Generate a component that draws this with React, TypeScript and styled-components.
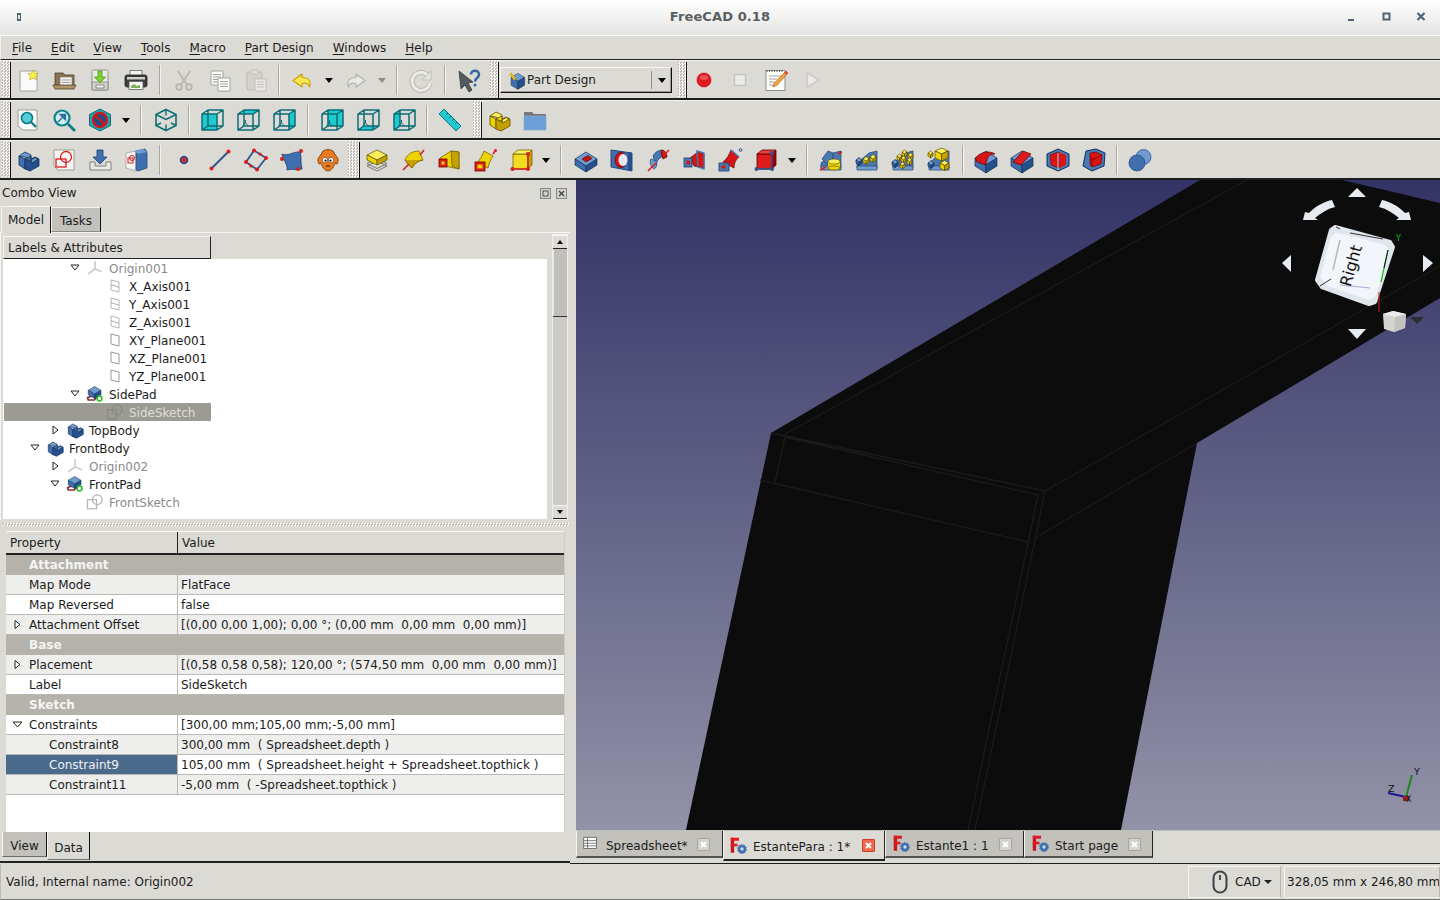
import React from "react";
import styled, { createGlobalStyle } from "styled-components";

const Global = createGlobalStyle`
  html, body { margin: 0; padding: 0; background: #dcdad5; }
  * { box-sizing: border-box; }
  #root { width: 1440px; height: 900px; overflow: hidden; }
`;

const Page = styled.div`
  width: 1440px; height: 900px; display: flex; flex-direction: column;
  background: #dcdad5; color: #1c1c1c;
  font: 12px/1 "DejaVu Sans", sans-serif; overflow: hidden;
`;

/* ---------- title bar ---------- */
const TitleBar = styled.div`
  height: 36px; flex: none; display: flex; align-items: center; justify-content: center;
  position: relative; background: linear-gradient(#ffffff, #e4e4e3);
  border-bottom: 1px solid #f8f8f8; padding-bottom: 3px;
`;
const TitleText = styled.div`
  font-weight: bold; font-size: 13px; color: #5a5f62; letter-spacing: .1px;
`;
const WinIcon = styled.svg`
  position: absolute; top: 10px; left: ${p => p.$x}px; width: 14px; height: 14px;
`;

/* ---------- menu ---------- */
const MenuBar = styled.div`
  height: 24px; flex: none; display: flex; align-items: center; padding-left: 2px;
  border-left: 1px solid #f2f1ee; border-bottom: 1px solid #222;
`;
const MenuItem = styled.div`
  padding: 0 9.5px 0 9px; font-size: 12px; line-height: 22px; color: #1c1c1c;
  & + & { padding-left: 9.5px; }
  u { text-underline-offset: 2px; }
`;

/* ---------- toolbars ---------- */
const Toolbar = styled.div`
  height: 40px; flex: none; display: flex; align-items: stretch; padding-left: 2px;
  border-top: 1px solid #f2f1ee; border-bottom: 2px solid #1d1d1d;
`;
const Grip = styled.div`
  width: ${p => p.$w || 8}px; flex: none; margin: 0 0 1px ${p => p.$before || 0}px;
  background: repeating-conic-gradient(#f6f5f2 0 25%, #bcbab3 0 50%) 0 0 / 3px 3px;
`;
const Group = styled.div`
  display: flex; align-items: center; border-left: 1px solid #111; margin-top: 1px;
  & > :first-child { margin-left: -1px; }
`;
const ToolBtn = styled.div`
  width: 36px; height: 36px; flex: none; display: flex; align-items: center; justify-content: center;
  opacity: ${p => (p.$off ? 0.45 : 1)};
`;
const Drop = styled.div`
  width: ${p => p.$w}px; height: 36px; flex: none; display: flex; align-items: center; justify-content: center;
  &::after {
    content: ""; border-left: 4.5px solid transparent; border-right: 4.5px solid transparent;
    border-top: 5px solid ${p => (p.$off ? "#8e8d88" : "#000")};
  }
`;
const Sep = styled.div`
  width: ${p => p.$w}px; height: 30px; flex: none; display: flex; justify-content: center;
  &::after { content: ""; width: 2px; height: 100%; background: linear-gradient(90deg, #a9a7a0 50%, #f4f3f0 50%); }
`;
const Combo = styled.div`
  width: 172px; height: 26px; flex: none; display: flex; align-items: center; padding-left: 7px;
  border: 1px solid #f4f3f0; border-right-color: #111; border-bottom-color: #111;
  box-shadow: inset -1px -1px 0 #9d9b94; gap: 0; font-size: 12px; position: relative;
  &&& { margin: 0 6px 0 1px; }
`;
const ComboArrow = styled.div`
  position: absolute; right: 0; top: 3px; bottom: 3px; width: 20px; display: flex; align-items: center; justify-content: center;
  border-left: 1px solid #8f8d87;
  &::after { content: ""; border-left: 4.5px solid transparent; border-right: 4.5px solid transparent; border-top: 5px solid #000; }
`;

/* ---------- main ---------- */
const Main = styled.div`
  height: 684px; flex: none; display: flex;
`;
const Dock = styled.div`
  width: 570px; flex: none; display: flex; flex-direction: column; border-bottom: 2px solid #222; height: 683px;
`;
const DockTitle = styled.div`
  height: 26px; flex: none; display: flex; align-items: center; padding: 0 2px; justify-content: space-between; font-size: 12px;
`;
const DockBtns = styled.div`
  display: flex; gap: 5px; padding-right: 1px;
`;
const TopTabs = styled.div`
  height: 27px; flex: none; display: flex; align-items: flex-end; border-bottom: 1px solid #f6f5f2; padding-left: 1px;
`;
const TopTab = styled.div`
  height: ${p => (p.$on ? 27 : 25)}px; width: 50px; display: flex; align-items: center; justify-content: center;
  font-size: 12px; background: ${p => (p.$on ? "#dcdad5" : "#c3c1bb")};
  border-top: 1px solid #f6f5f2; border-left: 1px solid #f6f5f2; border-right: 1px solid #111;
  ${p => (p.$on ? "margin-bottom:-1px;padding-bottom:1px;" : "border-bottom:1px solid #8d8b85;padding-top:2px;")}
`;
const ModelPane = styled.div`
  height: 287px; flex: none; display: flex; padding-left: 2px; border-left: 1px solid #f6f5f2;
`;
const TreeCol = styled.div`
  width: 544px; flex: none; padding-top: 3px; display: flex; flex-direction: column;
`;
const TreeHead = styled.div`
  width: 208px; height: 23px; flex: none; display: flex; align-items: center; padding: 0 0 0 4px; font-size: 12px;
  border-top: 1px solid #f6f5f2; border-left: 1px solid #f6f5f2; border-right: 1px solid #222; border-bottom: 1px solid #222;
`;
const Tree = styled.div`
  height: 260px; flex: none; background: #fff; overflow: hidden;
`;
const TreeRow = styled.div`
  width: 207px; height: 18px; display: flex; align-items: center; white-space: nowrap; margin-left: 1px;
  padding: 2px 0 0 ${p => 20 * p.$depth + 21}px;
  background: ${p => (p.$sel ? "#9c9b93" : "transparent")};
  color: ${p => (p.$sel ? "#dfded9" : p.$dim ? "#8a8a8a" : "#1c1c1c")};
  font-size: 12px;
`;
const Twist = styled.svg`
  width: 20px; height: 18px; flex: none; margin-top: -2px;
`;
const TreeIcon = styled.div`
  width: 20px; height: 18px; flex: none; display: flex; align-items: center; justify-content: center;
  margin: -2px 4px 0 0; opacity: ${p => (p.$dim ? 0.55 : 1)};
`;
const Scroll = styled.div`
  width: 16px; height: 286px; margin-left: 5px; margin-top: 1px; flex: none; display: flex; flex-direction: column;
  background: #c6c4be; border: 1px solid #f0efec;
`;
const ScrollBtn = styled.div`
  height: 14px; flex: none; background: #dcdad5; border-bottom: 1px solid #222; border-top: 1px solid #f6f5f2;
  display: flex; align-items: center; justify-content: center;
  &::after {
    content: ""; border-left: 3.5px solid transparent; border-right: 3.5px solid transparent;
    ${p => (p.$dir === "up" ? "border-bottom: 4px solid #111;" : "border-top: 4px solid #111;")}
  }
`;
const ScrollThumb = styled.div`
  height: 68px; flex: none; background: #c0bfb9; border-bottom: 1px solid #333; box-shadow: inset 1px 0 0 #e6e5e0;
`;
const ScrollTrack = styled.div`
  flex: 1; background: #cdcbc5;
`;
const Splitter = styled.div`
  height: 11px; flex: none; margin-left: 3px;
  background: linear-gradient(#dcdad5 3px, transparent 3px, transparent 6px, #dcdad5 6px),
    repeating-conic-gradient(#f6f5f2 0 25%, #bcbab3 0 50%) 0 0 / 3px 3px;
`;
const PropBox = styled.div`
  margin-left: 6px; width: 559px; height: 301px; flex: none; background: #fff; border-top: 1px solid #f6f5f2;
  border-right: 1px solid #cfcdc7; display: flex; flex-direction: column;
`;
const PropHead = styled.div`
  height: 23px; flex: none; display: grid; grid-template-columns: 172px 1fr; background: #dcdad5;
  border-bottom: 2px solid #222;
`;
const PropHeadCell = styled.div`
  display: flex; align-items: center; padding: 0 0 0 ${p => p.$pad}px; font-size: 12px;
  border-right: ${p => (p.$div ? "1px solid #222" : "none")};
`;
const PropGroup = styled.div`
  height: 20px; flex: none; background: #b4b2ab; color: #f4f4f2; font-weight: bold; font-size: 12px;
  display: flex; align-items: center; padding-left: 23px;
`;
const PropRow = styled.div`
  height: 20px; flex: none; display: grid; grid-template-columns: 172px 1fr; font-size: 12px;
  background: ${p => (p.$alt ? "#eeeeec" : "#fff")};
  border-bottom: 1px solid #bab8b2;
`;
const PropName = styled.div`
  display: flex; align-items: center; position: relative; white-space: pre; padding-top: 1px;
  padding-left: ${p => 23 + 20 * p.$lvl}px; border-right: 1px solid #bab8b2;
  ${p => (p.$sel ? "background:#4a6a8c;color:#f2f2f2;" : "")}
`;
const PropVal = styled.div`
  display: flex; align-items: center; padding: 1px 0 0 3px; white-space: pre; overflow: hidden;
`;
const PropTwist = styled.svg`
  position: absolute; left: 6px; top: 4px; width: 11px; height: 11px;
`;
const BotTabs = styled.div`
  height: 29px; flex: none; display: flex; align-items: flex-start; padding-left: 2px;
`;
const BotTab = styled.div`
  height: ${p => (p.$on ? 28 : 25)}px; width: ${p => (p.$on ? 43 : 45)}px; display: flex; align-items: center; justify-content: center;
  font-size: 12px; background: ${p => (p.$on ? "#dcdad5" : "#c3c1bb")};
  border-left: 1px solid #f6f5f2; border-right: 1px solid #111; border-bottom: 1px solid #6d6b66;
  padding-top: ${p => (p.$on ? 5 : 4)}px;
`;

const RightCol = styled.div`
  width: 870px; flex: none; display: flex; flex-direction: column; padding-left: 6px;
`;
const Viewport = styled.div`
  height: 651px; flex: none; position: relative; overflow: hidden;
  background: linear-gradient(#333366, #9292a8);
  border-bottom: 1px solid #bdbcb5;
`;
const Scene = styled.svg`
  position: absolute; inset: 0; width: 864px; height: 650px; display: block;
`;
const DocTabs = styled.div`
  height: 33px; flex: none; display: flex; align-items: flex-start; border-bottom: 1px solid #1d1d1d; margin-left: -6px; padding-left: 6px;
`;
const DocTab = styled.div`
  width: ${p => p.$w}px; height: ${p => (p.$on ? 30 : 27)}px; flex: none; display: flex; align-items: center; position: relative;
  background: ${p => (p.$on ? "#dcdad5" : "#c3c1bb")};
  border-left: 1px solid #f4f3f0;
  border-right: 1px solid #222; border-bottom: 2px solid ${p => (p.$on ? "#222" : "#55534f")};
  padding-left: ${p => p.$pad}px; gap: 5px; font-size: 12px;
  padding-top: ${p => (p.$on ? 1 : 0)}px;
  span { padding-top: ${p => (p.$on ? 2 : 4)}px; }
`;
const TabClose = styled.div`
  position: absolute; right: ${p => p.$r}px; top: ${p => (p.$on ? 8 : 7)}px; width: 13px; height: 13px;
  display: flex; align-items: center; justify-content: center;
  background: ${p => (p.$on ? "#ee6a4d" : "#d3d2cc")}; border: 1px solid ${p => (p.$on ? "#c9401f" : "#a8a6a0")};
  border-radius: 1px;
`;

const StatusBar = styled.div`
  height: 36px; flex: none; display: flex; align-items: center; font-size: 12px; border-left: 1px solid #bbb;
  border-bottom: 1px solid #777;
`;
const StatusMsg = styled.div`
  flex: 1; padding: 0 0 0 5px;
`;
const StatusCell = styled.div`
  height: 32px; width: ${p => p.$w}px; flex: none; display: flex; align-items: center; margin-left: ${p => p.$ml}px;
  border: 1px solid #f6f5f2; border-right-color: #b8b6af; border-bottom-color: #f6f5f2; white-space: nowrap;
  padding-left: ${p => p.$pad}px; gap: 3px; overflow: hidden;
`;
const Caret = styled.span`
  border-left: 4px solid transparent; border-right: 4px solid transparent; border-top: 4px solid #222;
`;
const GlyphSvg = styled.svg`
  width: ${p => p.$s || 24}px; height: ${p => p.$s || 24}px; flex: none; display: block; overflow: visible;
`;

/* ---------- drawing helpers ---------- */
type C = { t: string; f: string; s: string; o: string };
const Y: C = { t: "#fcef5e", f: "#edd400", s: "#c4a000", o: "#5c4a00" };
const B: C = { t: "#6f9bd0", f: "#3f6fae", s: "#24508e", o: "#122f55" };

const Box = ({ x, y, w, h, d, c }: { x: number; y: number; w: number; h: number; d: number; c: C }) => (
  <g stroke={c.o} strokeWidth=".7" strokeLinejoin="round">
    <polygon points={`${x},${y} ${x + w / 2},${y - d} ${x + w},${y} ${x + w / 2},${y + d}`} fill={c.t} />
    <polygon points={`${x},${y} ${x + w / 2},${y + d} ${x + w / 2},${y + d + h} ${x},${y + h}`} fill={c.f} />
    <polygon points={`${x + w},${y} ${x + w / 2},${y + d} ${x + w / 2},${y + d + h} ${x + w},${y + h}`} fill={c.s} />
  </g>
);
const G = ({ children, s }: { children: React.ReactNode; s?: number }) => (
  <GlyphSvg $s={s} viewBox="0 0 24 24">{children}</GlyphSvg>
);
const LBlock = ({ c }: { c: C }) => (
  <g stroke={c.o} strokeWidth=".8" strokeLinejoin="round">
    <polygon points="3,8 9,4 15,7 15,12 9,9" fill={c.t} />
    <polygon points="3,8 9,11 9,21 3,17" fill={c.f} />
    <polygon points="9,11 15,14 15,11 19,9 23,11 23,18 14,23 9,21" fill={c.s} />
    <polygon points="9,11 15,8 15,12 13,13" fill={c.f} />
    <polygon points="15,12 19,9.5 22,11 16,15" fill={c.t} />
  </g>
);
const Page2 = ({ x = 4, y = 3, w = 16, h = 19, fill = "#fafafa" }) => (
  <rect x={x} y={y} width={w} height={h} fill={fill} stroke="#9a9a95" strokeWidth=".9" rx=".5" />
);
const Wedge = () => (
  <g stroke="#1f3f6a" strokeWidth=".7" strokeLinejoin="round">
    <polygon points="2,15 14,5 22,3 22,20 2,20" fill="#4a78b0" />
    <polygon points="2,18 22,18 22,22 2,22" fill="#6f9bd0" />
  </g>
);

const Ic = {
  New: () => (<G><Page2 x={4} y={3} w={17} h={20} /><polygon points="17,2 18.6,5.4 22.4,5.6 19.6,8.2 20.6,11.8 17,10 13.6,11.8 14.4,8.2 11.8,5.6 15.4,5.4" fill="#fcef4e" stroke="#c4a000" strokeWidth=".6" /></G>),
  Open: () => (<G><path d="M3 5h8l2 2h9v13H3z" fill="#8a7350" stroke="#4f3f28" strokeWidth=".8" /><rect x="8" y="9" width="12" height="9" fill="#f3f3f0" stroke="#777" strokeWidth=".6" /><path d="M9.500 12h9M9.500 14.500h9" stroke="#888" strokeWidth=".8" /><path d="M1 17h23l-2 4H3z" fill="#b09468" stroke="#4f3f28" strokeWidth=".8" /></G>),
  Save: () => (<G><rect x="4" y="2" width="16" height="20" rx="1.500" fill="#e8e8e4" stroke="#8b8b86" strokeWidth=".9" /><rect x="4" y="14" width="16" height="8" fill="#d1d1cc" stroke="#777" strokeWidth=".7" /><rect x="8" y="17" width="8" height="3" fill="#f5f5f2" stroke="#666" strokeWidth=".7" /><path d="M10 3h4v6h3.500L12 15 6.500 9H10z" fill="#7fce3a" stroke="#4e9a06" strokeWidth=".8" /></G>),
  Print: () => (<G><rect x="6" y="2.500" width="12" height="6" fill="#f3f3f0" stroke="#555" strokeWidth=".7" /><rect x="1" y="7" width="22" height="12" rx="2" fill="#3d3d3d" stroke="#222" strokeWidth=".8" /><rect x="3" y="9" width="18" height="2.500" fill="#cfcfca" /><rect x="5" y="13.500" width="14" height="8" fill="#f5f5f2" stroke="#555" strokeWidth=".7" /><path d="M7 18l3-2 3 2 3-1v3H7z" fill="#79b058" /></G>),
  Cut: () => (<G><g stroke="#8a8a85" strokeWidth="1.800" fill="none"><path d="M6 3l8.500 13M18 3L9.500 16" /><circle cx="7" cy="19" r="2.800" /><circle cx="17" cy="19" r="2.800" /></g></G>),
  Copy: () => (<G><Page2 x={3} y={3} w={12} h={14} fill="#fbfbfa" /><path d="M5 6.500h8M5 9h8M5 11.500h8M5 14h6" stroke="#888" strokeWidth=".8" /><Page2 x={10} y={10} w={12} h={13} fill="#fbfbfa" /><path d="M12 13.500h8M12 16h8M12 18.500h8" stroke="#888" strokeWidth=".8" /></G>),
  Paste: () => (<G><rect x="3" y="4" width="15" height="18" rx="1" fill="#c8c8c2" stroke="#88887f" strokeWidth=".8" /><rect x="7" y="2" width="7" height="4" rx="1" fill="#e6e6e2" stroke="#88887f" strokeWidth=".7" /><Page2 x={11} y={11} w={11} h={12} /><path d="M13 14h7M13 16.500h7M13 19h7" stroke="#888" strokeWidth=".8" /></G>),
  Undo: () => (<G><path d="M11 5L2 11.500 11 18v-3.500c4-1 7 0 7.500 3.500 2-6-1-9.500-7.500-9.500z" fill="#fce94f" stroke="#c4a000" strokeWidth="1.100" strokeLinejoin="round" transform="translate(1,1)" /></G>),
  Redo: () => (<G><path d="M13 5l9 6.500L13 18v-3.500c-4-1-7 0-7.500 3.500-2-6 1-9.500 7.500-9.500z" fill="#e9e9e6" stroke="#b0b0aa" strokeWidth="1.100" strokeLinejoin="round" transform="translate(0,1)" /></G>),
  Refresh: () => (<G><path d="M20 9a9 9 0 1 0 1 6" fill="none" stroke="#b9b9b3" strokeWidth="5" /><path d="M20 9a9 9 0 1 0 1 6" fill="none" stroke="#eceae6" strokeWidth="3" /><polygon points="22,3 22,12 13,12" fill="#e4e3de" stroke="#b9b9b3" strokeWidth=".8" /></G>),
  What: () => (<G><polygon points="2,3 16,14 11,15 15,22 12,24 8,17 4,21" fill="#555a60" stroke="#2e3236" strokeWidth=".7" /><path d="M14 6.500c0-5 8-5 8 0 0 3.500-4 3.500-4 7" fill="none" stroke="#3465a4" strokeWidth="2.600" /><circle cx="18" cy="17" r="1.500" fill="#3465a4" /></G>),
  PD: ({ s = 24 }: { s?: number }) => (<G s={s}><Box x={4} y={8} w={17} h={10} d={5} c={B} /><path d="M3 3l6 8" stroke="#c4a000" strokeWidth="3.500" /><path d="M3 3l6 8" stroke="#fce94f" strokeWidth="1.800" strokeDasharray="1.500 1" /></G>),
  Rec: () => (<G><circle cx="12" cy="12" r="7" fill="#e01b24" stroke="#c00" strokeWidth=".7" /><ellipse cx="12" cy="9.500" rx="4" ry="2.500" fill="#f06a6a" opacity=".7" /></G>),
  Stop: () => (<G><rect x="6.500" y="6.500" width="11" height="11" fill="#ecebe7" stroke="#c4c3bd" strokeWidth="1.300" /></G>),
  MacroEd: () => (<G><rect x="2" y="2.500" width="19" height="20" fill="#fdfdfb" stroke="#777" strokeWidth=".8" /><path d="M3 2v2M5.500 2v2M8 2v2M10.500 2v2M13 2v2M15.500 2v2M18 2v2" stroke="#444" strokeWidth=".8" /><path d="M5 8h12M5 11h8M5 14h6M5 17h6" stroke="#9a9a95" strokeWidth=".9" /><path d="M22 3l2 2-11 12-4 2 1.500-4z" fill="#f5a742" stroke="#a85c00" strokeWidth=".7" /><path d="M22 3l2 2-2 2-2-2z" fill="#e04e4e" /></G>),
  Play: () => (<G><polygon points="7,5 19,12 7,19" fill="#ecebe7" stroke="#c4c3bd" strokeWidth="1.200" /></G>),
  FitAll: () => (<G><polygon points="2,2 21,2 21,22 7,22 2,18" fill="#fafafa" stroke="#8a8a85" strokeWidth=".8" /><circle cx="11" cy="10" r="5.500" fill="#55cdd6" stroke="#0d7b84" strokeWidth="1.600" /><path d="M15 14l5 5" stroke="#0d7b84" strokeWidth="2.400" /></G>),
  FitSel: () => (<G><circle cx="10" cy="10" r="7.500" fill="#cfeff2" stroke="#0d8089" strokeWidth="2.200" /><path d="M5.500 14.500l6-6M8 6.500h5.500V12z" fill="#2f6fa0" stroke="#2f6fa0" strokeWidth="1.300" /><path d="M16 16l7 7" stroke="#0d8089" strokeWidth="2.800" /></G>),
  DrawStyle: () => (<G><polygon points="12,1 22.500,6.500 22.500,17.500 12,23 1.500,17.500 1.500,6.500" fill="#1fa6ae" stroke="#0b5f66" strokeWidth=".9" /><circle cx="12" cy="12" r="7" fill="#1b4f8a" stroke="#d41616" strokeWidth="2.400" /><path d="M7 7l10 10" stroke="#d41616" strokeWidth="2.400" /></G>),
  Iso: () => (<G><polygon points="12,1.500 22,6.500 22,17.500 12,22.500 2,17.500 2,6.500" fill="none" stroke="#0d6d75" strokeWidth="1.600" /><path d="M2 6.500L12 11.500 22 6.500M12 1.500v6M12 22.500v-6M2 17.500l5-2.500M22 17.500l-5-2.500" stroke="#0d6d75" strokeWidth="1.400" fill="none" /></G>),
  View: ({ f }: { f: string }) => {
    const P: Record<string, string> = {
      front: "2,6 17,6 17,22 2,22", top: "2,6 8,2 23,2 17,6", right: "17,6 23,2 23,18 17,22",
      rear: "8,2 23,2 23,18 8,18", bottom: "2,22 8,18 23,18 17,22", left: "2,6 8,2 8,18 2,22",
    };
    return (<G><polygon points={P[f]} fill="#1fc9cf" /><path d="M2 6h15v16H2zM2 6l6-4h15v16l-6 4M17 6l6-4M8 2v16H23M8 18l-6 4" fill="none" stroke="#0d6d75" strokeWidth="1.500" strokeLinejoin="round" />{f !== "front" && <path d="M9.500 12v3M9.500 15l-3 3M9.500 15l3 3" stroke="#0d6d75" strokeWidth="1" fill="none" />}</G>);
  },
  Measure: () => (<G><polygon points="6,1 23,18 18,23 1,6" fill="#1fc9cf" stroke="#0d6d75" strokeWidth=".9" /><path d="M8 7l2-2M11 10l2-2M14 13l2-2M17 16l2-2" stroke="#0d6d75" strokeWidth="1" /></G>),
  Part: () => (<G><LBlock c={Y} /></G>),
  Folder: () => (<G><path d="M1 4h8l2 2h12v4H1z" fill="#77777a" /><path d="M1 8h22v14H1z" fill="#6c9fd8" stroke="#8aa8cc" strokeWidth=".7" /></G>),
  Body: () => (<G><LBlock c={B} /></G>),
  Sketch: () => (<G><polygon points="2,2 22,2 22,22 6,22 2,18" fill="#f4f4f2" stroke="#8a8a85" strokeWidth=".8" /><rect x="4" y="11" width="10" height="8" fill="none" stroke="#dd1f1f" strokeWidth="1.300" /><circle cx="14" cy="9" r="5.500" fill="none" stroke="#dd1f1f" strokeWidth="1.300" /></G>),
  Attach: () => (<G><path d="M2 14v8h21v-8h-5v4H7v-4z" fill="#e8e8e4" stroke="#777" strokeWidth=".9" /><path d="M9 2h6v7h4l-7 7-7-7h4z" fill="#3f6fae" stroke="#1b3f70" strokeWidth=".8" /></G>),
  Clone: () => (<G><polygon points="2,5 12,3 12,23 2,20" fill="#f4f4f2" stroke="#999" strokeWidth=".7" /><rect x="4" y="10" width="5" height="5" fill="none" stroke="#dd1f1f" strokeWidth="1" /><circle cx="8" cy="10" r="2.500" fill="none" stroke="#dd1f1f" strokeWidth="1" /><polygon points="12,3 21,1 23,4 23,20 14,23 12,22" fill="#3f6fae" stroke="#1b3f70" strokeWidth=".7" /><polygon points="10,3 19,1 23,4 14,6" fill="#6f9bd0" /></G>),
  Point: () => (<G><circle cx="12" cy="12" r="3.500" fill="#c8322f" stroke="#2a4f8a" strokeWidth="1.600" /></G>),
  Line: () => (<G><path d="M3.500 20.500l17-17" stroke="#2e558f" strokeWidth="2" /><circle cx="3.500" cy="20.500" r="2" fill="#d81e1e" /><circle cx="20.500" cy="3.500" r="2" fill="#d81e1e" /></G>),
  Plane: () => (<G><polygon points="10,2.500 22,10 13,21.500 2,14" fill="none" stroke="#2e558f" strokeWidth="1.800" /><g fill="#d81e1e"><circle cx="10" cy="2.500" r="2" /><circle cx="22" cy="10" r="2" /><circle cx="13" cy="21.500" r="2" /><circle cx="2" cy="14" r="2" /><circle cx="16" cy="6" r="1.600" /><circle cx="7" cy="18" r="1.600" /></g></G>),
  Lcs: () => (<G><path d="M2 6c5 3 12-3 18-2 2 5 0 10 2 17-6 2-10-1-15 1C8 16 3 12 2 6z" fill="#3f6fae" stroke="#1b3f70" strokeWidth=".8" /><g fill="#d81e1e"><circle cx="2" cy="11" r="2" /><circle cx="21" cy="3" r="2" /><circle cx="18" cy="21" r="2" /></g></G>),
  Sheep: () => (<G><path d="M7 3c3-2 7-2 10 0l3 5c2 1 3 5 1 8l-2-1c-1 4-4 8-7 8s-6-4-7-8l-2 1C1 13 2 9 4 8z" fill="#e8791c" stroke="#7f3f08" strokeWidth=".9" /><circle cx="9" cy="12" r="2.600" fill="#fff" stroke="#444" strokeWidth=".6" /><circle cx="15" cy="12" r="2.600" fill="#fff" stroke="#444" strokeWidth=".6" /><circle cx="9.500" cy="12.500" r="1.100" fill="#111" /><circle cx="14.500" cy="12.500" r="1.100" fill="#111" /><path d="M10 18h4" stroke="#5a2d06" strokeWidth="1.200" /></G>),
  Pad: () => (<G><path d="M2 18l10-5 10 5-10 5z" fill="none" stroke="#777" strokeWidth="1" /><path d="M2 15.500l10-5 10 5-10 5z" fill="none" stroke="#777" strokeWidth="1" /><Box x={2} y={7} w={20} h={5} d={5} c={Y} /></G>),
  Rev: () => (<G><path d="M4 12C6 6 12 3 18 3l4 9c-4 0-8 3-11 8z" fill="#edd400" stroke="#7a6400" strokeWidth=".8" /><path d="M4 12c2 3 4 6 7 8 2-4 6-7 11-8" fill="#c4a000" stroke="#7a6400" strokeWidth=".8" /><path d="M2 22l6-6M19 7l4-5" stroke="#d81e1e" strokeWidth="1.600" /></G>),
  Loft: () => (<G><polygon points="3,10 14,3 22,4 22,21 8,18" fill="#edd400" stroke="#7a6400" strokeWidth=".8" /><polygon points="14,3 22,4 22,21 15,18" fill="#c4a000" stroke="#7a6400" strokeWidth=".8" /><rect x="2" y="11" width="8" height="8" fill="#d81e1e" stroke="#700" strokeWidth=".8" /><rect x="4.500" y="13.500" width="3" height="3" fill="#edd400" /></G>),
  Pipe: () => (<G><path d="M4 15C8 10 10 6 11 3l9 5c-2 3-4 7-5 12z" fill="#edd400" stroke="#7a6400" strokeWidth=".8" /><rect x="2" y="14" width="10" height="9" fill="#d81e1e" stroke="#700" strokeWidth=".8" /><rect x="4.500" y="16.500" width="5" height="4" fill="#edd400" /><path d="M20 6l2-3" stroke="#d81e1e" strokeWidth="1.600" /><circle cx="22.500" cy="2.500" r="1.500" fill="#d81e1e" /></G>),
  PrimAdd: () => (<G><rect x="4" y="6" width="15" height="15" fill="#f2dc1f" stroke="#7a6400" strokeWidth=".8" /><polygon points="4,6 9,2 23,2 19,6" fill="#fcef5e" stroke="#7a6400" strokeWidth=".8" /><polygon points="19,6 23,2 23,17 19,21" fill="#c4a000" stroke="#7a6400" strokeWidth=".8" /><path d="M4 21l15-0M19 6v15" stroke="#d81e1e" strokeWidth="1.400" /><g fill="#d81e1e"><circle cx="3.500" cy="21" r="2" /><circle cx="19" cy="21" r="2" /><circle cx="19" cy="6" r="2" /></g></G>),
  Pocket: () => (<G><Box x={1} y={11} w={22} h={6} d={7} c={B} /><polygon points="8,11 14,7.500 18,10.500 12,14" fill="#c21313" stroke="#5a0000" strokeWidth=".6" /></G>),
  Hole: () => (<G><polygon points="1,2 22,5 22,23 1,19" fill="#3f6fae" stroke="#1b3f70" strokeWidth=".9" /><polygon points="18,4 22,5 22,23 18,22" fill="#24508e" /><ellipse cx="11" cy="12" rx="6" ry="7.500" fill="#d81414" stroke="#5a0000" strokeWidth=".7" /><ellipse cx="13" cy="12" rx="4.500" ry="6" fill="#e8e8ee" /></G>),
  Groove: () => (<G><path d="M7 8C9 4 13 2 16 2l2 6c-4 1-7 4-8 9z" fill="#4a78b0" stroke="#1b3f70" strokeWidth=".7" /><path d="M16 2c3 0 5 4 5 7l-4 2-2-7z" fill="#d81414" stroke="#5a0000" strokeWidth=".7" /><path d="M5 11c-2 3 0 8 3 10 2-1 4-4 2-8z" fill="#6f9bd0" stroke="#1b3f70" strokeWidth=".7" /><path d="M2 23l8-8M19 6l4-4" stroke="#d81e1e" strokeWidth="1.600" /></G>),
  SubLoft: () => (<G><polygon points="8,10 16,4 22,6 22,20 12,18" fill="#d81414" stroke="#5a0000" strokeWidth=".7" /><polygon points="15,3 22,5 22,21 16,19" fill="none" stroke="#4a78b0" strokeWidth="1.400" /><rect x="2" y="10" width="8" height="9" fill="#4a78b0" stroke="#1b3f70" strokeWidth=".8" /><rect x="4.500" y="12.500" width="3.500" height="4" fill="#d81414" /></G>),
  SubPipe: () => (<G><path d="M5 14c4-3 6-7 8-12l8 7c-3 2-5 6-5 11z" fill="#d81414" stroke="#5a0000" strokeWidth=".7" /><rect x="1" y="15" width="10" height="8" fill="#4a78b0" stroke="#1b3f70" strokeWidth=".8" /><rect x="3.500" y="17.500" width="4" height="3" fill="#d81414" /><path d="M13 2l8 7" stroke="#4a78b0" strokeWidth="1.600" /><circle cx="22.500" cy="2" r="1.400" fill="none" stroke="#2e558f" /></G>),
  PrimSub: () => (<G><rect x="3" y="6" width="15" height="15" fill="#e01b1b" stroke="#5a0000" strokeWidth=".8" /><polygon points="3,6 8,2 22,2 18,6" fill="#ef3b3b" stroke="#5a0000" strokeWidth=".8" /><polygon points="18,6 22,2 22,17 18,21" fill="#a40000" stroke="#5a0000" strokeWidth=".8" /><path d="M3 21h15V6" stroke="#2e558f" strokeWidth="1.400" fill="none" /><g fill="#2e558f"><circle cx="2.500" cy="21" r="2" /><circle cx="18" cy="21" r="2" /><circle cx="18" cy="5" r="2" /></g></G>),
  Feat: ({ v }: { v: number }) => (
    <G>
      <Wedge />
      {v === 0 && <><polygon points="3,11 9,3 14,5 14,13 9,17" fill="#4a78b0" stroke="#1f3f6a" strokeWidth=".7" /><rect x="9" y="14" width="12" height="6" fill="#edd400" /><ellipse cx="15" cy="20" rx="6" ry="2" fill="#edd400" stroke="#5c4a00" strokeWidth=".6" /><ellipse cx="15" cy="13.500" rx="6" ry="2.500" fill="#fcef5e" stroke="#5c4a00" strokeWidth=".6" /><path d="M1 22l6-3M19 6l4-2" stroke="#d81e1e" strokeWidth="1.400" /></>}
      {v === 1 && <><Box x={1} y={12} w={6} h={3} d={2.500} c={B} /><Box x={8} y={11} w={6} h={3} d={2.500} c={Y} /><Box x={15} y={9} w={6} h={3} d={2.500} c={Y} /></>}
      {v === 2 && <><Box x={1} y={14} w={6} h={3} d={2.500} c={B} /><Box x={6} y={8} w={5} h={3} d={2} c={Y} /><Box x={11} y={4} w={5} h={3} d={2} c={Y} /><Box x={17} y={7} w={5} h={3} d={2} c={Y} /><Box x={10} y={10} w={5} h={3} d={2} c={Y} /><Box x={16} y={12} w={5} h={3} d={2} c={Y} /><Box x={9} y={16} w={5} h={3} d={2} c={Y} /></>}
      {v === 3 && <><Box x={1} y={15} w={6} h={3} d={2.500} c={B} /><Box x={1} y={5} w={5} h={3} d={2} c={Y} /><Box x={8} y={3} w={13} h={7} d={3} c={Y} /><Box x={13} y={15} w={9} h={5} d={2.500} c={Y} /></>}
    </G>
  ),
  Fillet: () => (<G><Box x={1} y={10} w={22} h={8} d={7} c={B} /><path d="M2 10c2-4 8-6 12-6 3 0 6 1 7 2-6 0-8 3-9 11-3-1-7-2-10-4z" fill="#d81414" stroke="#5a0000" strokeWidth=".7" /></G>),
  Chamfer: () => (<G><Box x={1} y={10} w={22} h={8} d={7} c={B} /><polygon points="3,14 13,3 21,6 11,17" fill="#e01b1b" stroke="#5a0000" strokeWidth=".7" /></G>),
  Draft: () => (<G><polygon points="12,1 23,6 23,18 12,23 1,18 1,6" fill="#4a78b0" stroke="#0d2f60" strokeWidth="1" /><polygon points="12,4 20,7 20,17 13,20" fill="#d81414" /><polygon points="4,7 12,4 13,20 5,17" fill="#d81414" stroke="#5a0000" strokeWidth=".5" /><path d="M12 5v17" stroke="#cfd8e6" strokeWidth="1" /></G>),
  Thick: () => (<G><polygon points="4,3 14,1 23,5 22,18 10,23 1,18" fill="#4a78b0" stroke="#0d2f60" strokeWidth="1" /><polygon points="8,5 14,4 20,7 19,16 10,19 8,17" fill="#d81414" stroke="#5a0000" strokeWidth=".6" /><path d="M10 19V12l10-5M10 12L8 8" stroke="#7a0000" strokeWidth=".8" fill="none" /></G>),
  Bool: () => (<G><circle cx="15.500" cy="9" r="7.500" fill="#6f9bd0" stroke="#2e558f" strokeWidth=".8" /><circle cx="9" cy="15" r="8" fill="#3f6fae" stroke="#24508e" strokeWidth=".8" /></G>),
  Origin: () => (<G s={18}><path d="M12 3v10M12 13l9 4M12 13L3 20" stroke="#a3a3a0" strokeWidth="2.200" fill="none" /></G>),
  Axis: () => (<G s={16}><path d="M6 3l12 3v15L6 18z" fill="#fff" stroke="#a3a3a0" strokeWidth="1.200" /><path d="M6 10l12 4" stroke="#999" strokeWidth="1.200" /></G>),
  PlaneT: () => (<G s={16}><path d="M6 3l12 3v15L6 18z" fill="#fff" stroke="#8f8f8c" strokeWidth="1.400" /></G>),
  PadT: () => (<G s={18}><path d="M2 17c5-3 10-3 12 0l-3 3H3z" fill="none" stroke="#8b2e2e" strokeWidth="2.200" /><Box x={3} y={7} w={17} h={6} d={5} c={B} /><circle cx="18" cy="18" r="3.200" fill="#fff" stroke="#1fbe1f" strokeWidth="2" /></G>),
  BodyT: () => (<G s={18}><LBlock c={B} /></G>),
  SketchT: () => (<G s={18}><rect x="2" y="9" width="12" height="12" fill="none" stroke="#777" strokeWidth="1.600" /><circle cx="15" cy="9" r="6.500" fill="none" stroke="#777" strokeWidth="1.600" /></G>),
  FC: () => (<G s={18}><rect x="1" y="1" width="4.500" height="20" fill="#c4161c" /><rect x="1" y="1" width="11" height="4" fill="#e01b24" /><rect x="1" y="9" width="9" height="3.500" fill="#e01b24" /><circle cx="16" cy="16" r="5.500" fill="#3f6fae" stroke="#3f6fae" strokeWidth="2" strokeDasharray="2 1.400" /><circle cx="16" cy="16" r="2.200" fill="#cfe0f2" /></G>),
  Sheet: () => (<G s={18}><rect x="1" y="3" width="17" height="15" fill="#fff" stroke="#555" strokeWidth="1" /><path d="M1 7.500h17M1 11h17M1 14.500h17M6 3v15" stroke="#555" strokeWidth="1" /></G>),
};

const X = ({ c = "#fff" }: { c?: string }) => (
  <GlyphSvg $s={9} viewBox="0 0 9 9"><path d="M2 2l5 5M7 2L2 7" stroke={c} strokeWidth="2" /></GlyphSvg>
);

const Tw = ({ open }: { open: boolean }) => (
  <Twist viewBox="0 0 20 18">
    {open ? <polygon points="6,6 14,6 10,11" fill="#fff" stroke="#222" strokeWidth="1" /> : <polygon points="8,5 13,9 8,13" fill="#fff" stroke="#222" strokeWidth="1" />}
  </Twist>
);

const tree = [
  { d: 2, o: true, i: <Ic.Origin />, t: "Origin001", dim: true },
  { d: 3, i: <Ic.Axis />, t: "X_Axis001" },
  { d: 3, i: <Ic.Axis />, t: "Y_Axis001" },
  { d: 3, i: <Ic.Axis />, t: "Z_Axis001" },
  { d: 3, i: <Ic.PlaneT />, t: "XY_Plane001" },
  { d: 3, i: <Ic.PlaneT />, t: "XZ_Plane001" },
  { d: 3, i: <Ic.PlaneT />, t: "YZ_Plane001" },
  { d: 2, o: true, i: <Ic.PadT />, t: "SidePad" },
  { d: 3, i: <Ic.SketchT />, t: "SideSketch", sel: true, idim: true },
  { d: 1, o: false, i: <Ic.BodyT />, t: "TopBody" },
  { d: 0, o: true, i: <Ic.BodyT />, t: "FrontBody" },
  { d: 1, o: false, i: <Ic.Origin />, t: "Origin002", dim: true },
  { d: 1, o: true, i: <Ic.PadT />, t: "FrontPad" },
  { d: 2, i: <Ic.SketchT />, t: "FrontSketch", dim: true },
];

const Lbl = ({ k, l }: { k: string; l: string }) => (
  <MenuItem><u>{k}</u>{l}</MenuItem>
);

const T = ({ children, off }: { children: React.ReactNode; off?: boolean }) => <ToolBtn $off={off}>{children}</ToolBtn>;

const Edge = styled.path`
  fill: none; stroke: #1b1b1b; stroke-width: 1.300;
`;

export default function App() {
  return (
    <Page>
      <Global />
      <TitleBar>
        <WinIcon $x={12} viewBox="0 0 14 14"><path d="M5 3h4v8H5z" fill="#4f6470" /><rect x="6" y="5" width="2" height="4" fill="#dfe3e5" /></WinIcon>
        <TitleText>FreeCAD 0.18</TitleText>
        <WinIcon $x={1347} viewBox="0 0 14 14"><rect x="1" y="9" width="6" height="2" fill="#4f6470" /></WinIcon>
        <WinIcon $x={1380} viewBox="0 0 14 14"><rect x="3.500" y="3.500" width="6" height="6" fill="none" stroke="#4f6470" strokeWidth="2" /></WinIcon>
        <WinIcon $x={1415} viewBox="0 0 14 14"><path d="M2.500 3l7 7M9.500 3l-7 7" stroke="#4f6470" strokeWidth="2.200" /></WinIcon>
      </TitleBar>

      <MenuBar>
        <Lbl k="F" l="ile" /><Lbl k="E" l="dit" /><Lbl k="V" l="iew" /><Lbl k="T" l="ools" /><Lbl k="M" l="acro" />
        <Lbl k="P" l="art Design" /><Lbl k="W" l="indows" /><Lbl k="H" l="elp" />
      </MenuBar>

      <Toolbar>
        <Grip />
        <Group>
          <T><Ic.New /></T><T><Ic.Open /></T><T><Ic.Save /></T><T><Ic.Print /></T>
          <Sep $w={12} />
          <T off><Ic.Cut /></T><T><Ic.Copy /></T><T off><Ic.Paste /></T>
          <Sep $w={10} />
          <T><Ic.Undo /></T><Drop $w={17} />
          <T><Ic.Redo /></T><Drop $off $w={18} />
          <Sep $w={12} />
          <T><Ic.Refresh /></T>
          <Sep $w={12} />
          <T><Ic.What /></T>
        </Group>
        <Grip $before={3} />
        <Group>
          <Combo><Ic.PD s={19} />Part Design<ComboArrow /></Combo>
        </Group>
        <Grip />
        <Group>
          <T><Ic.Rec /></T><T><Ic.Stop /></T><T><Ic.MacroEd /></T><T><Ic.Play /></T>
        </Group>
      </Toolbar>

      <Toolbar>
        <Grip />
        <Group>
          <T><Ic.FitAll /></T><T><Ic.FitSel /></T><T><Ic.DrawStyle /></T><Drop $w={16} />
          <Sep $w={14} />
          <T><Ic.Iso /></T>
          <Sep $w={10} />
          <T><Ic.View f="front" /></T><T><Ic.View f="top" /></T><T><Ic.View f="right" /></T>
          <Sep $w={12} />
          <T><Ic.View f="rear" /></T><T><Ic.View f="bottom" /></T><T><Ic.View f="left" /></T>
          <Sep $w={10} />
          <T><Ic.Measure /></T>
        </Group>
        <Grip $before={5} />
        <Group>
          <T><Ic.Part /></T><T><Ic.Folder /></T>
        </Group>
      </Toolbar>

      <Toolbar>
        <Grip />
        <Group>
          <T><Ic.Body /></T><T><Ic.Sketch /></T><T><Ic.Attach /></T><T><Ic.Clone /></T>
          <Sep $w={12} />
          <T><Ic.Point /></T><T><Ic.Line /></T><T><Ic.Plane /></T><T><Ic.Lcs /></T><T><Ic.Sheep /></T>
        </Group>
        <Grip $before={2} $w={11} />
        <Group>
          <T><Ic.Pad /></T><T><Ic.Rev /></T><T><Ic.Loft /></T><T><Ic.Pipe /></T><T><Ic.PrimAdd /></T><Drop $w={14} />
          <Sep $w={15} />
          <T><Ic.Pocket /></T><T><Ic.Hole /></T><T><Ic.Groove /></T><T><Ic.SubLoft /></T><T><Ic.SubPipe /></T><T><Ic.PrimSub /></T><Drop $w={16} />
          <Sep $w={13} />
          <T><Ic.Feat v={0} /></T><T><Ic.Feat v={1} /></T><T><Ic.Feat v={2} /></T><T><Ic.Feat v={3} /></T>
          <Sep $w={11} />
          <T><Ic.Fillet /></T><T><Ic.Chamfer /></T><T><Ic.Draft /></T><T><Ic.Thick /></T>
          <Sep $w={10} />
          <T><Ic.Bool /></T>
        </Group>
      </Toolbar>

      <Main>
        <Dock>
          <DockTitle>
            Combo View
            <DockBtns>
              <GlyphSvg $s={11} viewBox="0 0 11 11"><rect x=".5" y=".5" width="10" height="10" fill="#d2d0ca" stroke="#888" /><rect x="3" y="3" width="5" height="5" fill="none" stroke="#555" /></GlyphSvg>
              <GlyphSvg $s={11} viewBox="0 0 11 11"><rect x=".5" y=".5" width="10" height="10" fill="#d2d0ca" stroke="#888" /><path d="M3 3l5 5M8 3L3 8" stroke="#444" strokeWidth="1.300" /></GlyphSvg>
            </DockBtns>
          </DockTitle>
          <TopTabs>
            <TopTab $on>Model</TopTab>
            <TopTab>Tasks</TopTab>
          </TopTabs>
          <ModelPane>
            <TreeCol>
              <TreeHead>Labels &amp; Attributes</TreeHead>
              <Tree>
                {tree.map((r) => (
                  <TreeRow key={r.t} $depth={r.d} $sel={r.sel} $dim={r.dim}>
                    {r.o === undefined ? <Twist viewBox="0 0 20 18" /> : <Tw open={r.o} />}
                    <TreeIcon $dim={r.dim || r.idim}>{r.i}</TreeIcon>
                    {r.t}
                  </TreeRow>
                ))}
              </Tree>
            </TreeCol>
            <Scroll>
              <ScrollBtn $dir="up" />
              <ScrollThumb />
              <ScrollTrack />
              <ScrollBtn $dir="down" />
            </Scroll>
          </ModelPane>
          <Splitter />
          <PropBox>
            <PropHead>
              <PropHeadCell $pad={4} $div>Property</PropHeadCell>
              <PropHeadCell $pad={4}>Value</PropHeadCell>
            </PropHead>
            <PropGroup>Attachment</PropGroup>
            <PropRow $alt><PropName $lvl={0}>Map Mode</PropName><PropVal>FlatFace</PropVal></PropRow>
            <PropRow><PropName $lvl={0}>Map Reversed</PropName><PropVal>false</PropVal></PropRow>
            <PropRow $alt>
              <PropName $lvl={0}><PropTwist viewBox="0 0 11 11"><polygon points="3,1.500 8,5.500 3,9.500" fill="#fff" stroke="#222" /></PropTwist>Attachment Offset</PropName>
              <PropVal>{"[(0,00 0,00 1,00); 0,00 °; (0,00 mm  0,00 mm  0,00 mm)]"}</PropVal>
            </PropRow>
            <PropGroup>Base</PropGroup>
            <PropRow $alt>
              <PropName $lvl={0}><PropTwist viewBox="0 0 11 11"><polygon points="3,1.500 8,5.500 3,9.500" fill="#fff" stroke="#222" /></PropTwist>Placement</PropName>
              <PropVal>{"[(0,58 0,58 0,58); 120,00 °; (574,50 mm  0,00 mm  0,00 mm)]"}</PropVal>
            </PropRow>
            <PropRow><PropName $lvl={0}>Label</PropName><PropVal>SideSketch</PropVal></PropRow>
            <PropGroup>Sketch</PropGroup>
            <PropRow>
              <PropName $lvl={0}><PropTwist viewBox="0 0 11 11"><polygon points="1,3 10,3 5.500,8" fill="#fff" stroke="#222" /></PropTwist>Constraints</PropName>
              <PropVal>[300,00 mm;105,00 mm;-5,00 mm]</PropVal>
            </PropRow>
            <PropRow $alt><PropName $lvl={1}>Constraint8</PropName><PropVal>{"300,00 mm  ( Spreadsheet.depth )"}</PropVal></PropRow>
            <PropRow><PropName $lvl={1} $sel>Constraint9</PropName><PropVal>{"105,00 mm  ( Spreadsheet.height + Spreadsheet.topthick )"}</PropVal></PropRow>
            <PropRow $alt><PropName $lvl={1}>Constraint11</PropName><PropVal>{"-5,00 mm  ( -Spreadsheet.topthick )"}</PropVal></PropRow>
          </PropBox>
          <BotTabs>
            <BotTab>View</BotTab>
            <BotTab $on>Data</BotTab>
          </BotTabs>
        </Dock>

        <RightCol>
          <Viewport>
            <Scene viewBox="576 180 864 650">
              <polygon points="1200,180 1342,180 1440,203 1440,298 1197,443 1121,830 686,830 771,433" fill="#0c0c0c" />
              <Edge d="M771 433L1045 491M785 437L1038 495M760 480L1028 542M785 437L775 482" />
              <Edge d="M1045 491L975 830M1038 495L968 830M1045 491L1440 266M1035 538L1197 443M785 434L1247 180" />

              {/* navigation cube */}
              <g fill="#e6ecf2">
                <polygon points="1357,188 1348,197 1366,197" />
                <polygon points="1357,339 1348,329 1366,329" />
                <polygon points="1282,263 1291,255 1291,272" />
                <polygon points="1433,263 1423,255 1423,272" />
                <path d="M1303 220l2-8 4 1c7-7 14-11 23-13l3 7c-8 2-14 6-20 11l3 2z" />
                <path d="M1411 220l-2-8-4 1c-7-7-14-11-23-13l-3 7c8 2 14 6 20 11l-3 2z" />
              </g>
              <polygon points="1335,227 1390,242 1393,247 1375,302 1369,304 1322,287 1317,280 1331,230" fill="#dfe6ee" stroke="#dfe6ee" strokeWidth="4" strokeLinejoin="round" />
              <polygon points="1336,234 1384,246 1388,251 1374,296 1368,298 1327,284 1322,277 1332,238" fill="#f2f5f9" stroke="#f2f5f9" strokeWidth="3" strokeLinejoin="round" />
              <path d="M1340 240L1333 270" stroke="#b8b8b8" strokeWidth="1.500" fill="none" />
              <path d="M1350 233L1383 239M1336 227l4 2M1320 286L1331 279" stroke="#333" strokeWidth="1" fill="none" />
              <path d="M1388 250L1381 282" stroke="#12c012" strokeWidth="1.200" fill="none" />
              <path d="M1388 250L1384 268" stroke="#111" strokeWidth="1" fill="none" />
              <path d="M1340 285L1370 288" stroke="#b0a8e0" strokeWidth="1.200" fill="none" />
              <path d="M1379 292v20" stroke="#d81e1e" strokeWidth="1" />
              <text x="1352" y="266" textAnchor="middle" dominantBaseline="middle" fontFamily="DejaVu Sans, sans-serif" fontSize="16" fill="#111" transform="rotate(-74 1352 266)">Right</text>
              <text x="1396" y="241" fontFamily="DejaVu Sans, sans-serif" fontSize="8" fill="#12c012">Y</text>
              <polygon points="1383,314 1393,311 1406,314 1405,328 1394,332 1384,329" fill="#d4d4d0" />
              <polygon points="1383,314 1393,311 1406,314 1395,317" fill="#ececea" />
              <polygon points="1395,317 1406,314 1405,328 1394,332" fill="#c3c3bf" />
              <polygon points="1410,317 1424,317 1417,324" fill="#2c2c2c" />

              {/* axis cross */}
              <path d="M1406 797L1412 775" stroke="#1b8a1b" strokeWidth="2" />
              <path d="M1406 797L1388 793" stroke="#1a1a8c" strokeWidth="2" />
              <rect x="1403" y="796" width="6" height="5" fill="#8f1e1e" />
              <text x="1414" y="775" fontFamily="DejaVu Sans, sans-serif" fontSize="9.500" fill="#111">Y</text>
              <text x="1388" y="792" fontFamily="DejaVu Sans, sans-serif" fontSize="9.500" fill="#111">Z</text>
              <text x="1406" y="802" fontFamily="DejaVu Sans, sans-serif" fontSize="8" fill="#111">X</text>
            </Scene>
          </Viewport>
          <DocTabs>
            <DocTab $w={147} $pad={6}><Ic.Sheet /><span>Spreadsheet*</span><TabClose $r={12}><X /></TabClose></DocTab>
            <DocTab $w={162} $pad={6} $on><Ic.FC /><span>EstantePara : 1*</span><TabClose $on $r={9}><X /></TabClose></DocTab>
            <DocTab $w={139} $pad={7}><Ic.FC /><span>Estante1 : 1</span><TabClose $r={11}><X /></TabClose></DocTab>
            <DocTab $w={129} $pad={7}><Ic.FC /><span>Start page</span><TabClose $r={11}><X /></TabClose></DocTab>
          </DocTabs>
        </RightCol>
      </Main>

      <StatusBar>
        <StatusMsg>Valid, Internal name: Origin002</StatusMsg>
        <StatusCell $w={93} $ml={0} $pad={19}>
          <GlyphSvg $s={24} viewBox="0 0 24 24"><rect x="5.500" y="1.500" width="13" height="21" rx="6.500" fill="none" stroke="#3a4247" strokeWidth="2" /><path d="M12 5v5" stroke="#3a4247" strokeWidth="1.800" /></GlyphSvg>
          CAD
          <Caret />
        </StatusCell>
        <StatusCell $w={156} $ml={3} $pad={2}>328,05 mm x 246,80 mm</StatusCell>
      </StatusBar>
    </Page>
  );
}
